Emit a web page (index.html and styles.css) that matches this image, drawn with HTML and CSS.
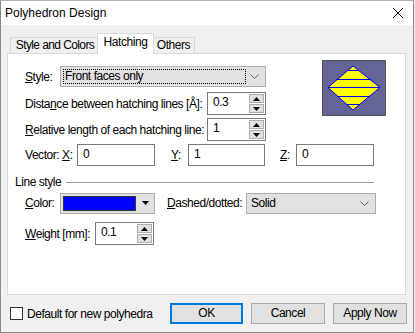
FILE: index.html
```html
<!DOCTYPE html>
<html>
<head>
<meta charset="utf-8">
<link rel="stylesheet" href="styles.css">
</head>
<body>
<div class="window">
  <div class="titlebar">
    <span class="title">Polyhedron Design</span>
    <svg class="close" width="12" height="12" viewBox="0 0 12 12"><path d="M1 1 L11 11 M11 1 L1 11" stroke="#000" stroke-width="1"/></svg>
  </div>
  <div class="tabs">
    <div class="tab t1">Style and Colors</div>
    <div class="tab t2 selected">Hatching</div>
    <div class="tab t3">Others</div>
  </div>
  <div class="panel">
    <div class="top">
      <div class="leftcol">
        <div class="row r1">
          <span class="lbl"><u>S</u>tyle:</span>
          <div class="combo wide">
            <span class="focus">Front faces only</span>
            <svg class="chev" width="9" height="5" viewBox="0 0 9 5"><path d="M0.5 0.5 L4.5 4.5 L8.5 0.5" fill="none" stroke="#666" stroke-width="1"/></svg>
          </div>
        </div>
        <div class="row r2">
          <span class="lbl">Dista<u>n</u>ce between hatching lines [Å]:</span>
          <div class="spin">
            <div class="edit">0.3</div>
            <div class="btns">
              <div class="sb"><svg width="7" height="4" viewBox="0 0 7 4"><path d="M3.5 0 L7 4 L0 4 Z" fill="#000"/></svg></div>
              <div class="sb"><svg width="7" height="4" viewBox="0 0 7 4"><path d="M0 0 L7 0 L3.5 4 Z" fill="#000"/></svg></div>
            </div>
          </div>
        </div>
        <div class="row r3">
          <span class="lbl"><u>R</u>elative length of each hatching line:</span>
          <div class="spin">
            <div class="edit">1</div>
            <div class="btns">
              <div class="sb"><svg width="7" height="4" viewBox="0 0 7 4"><path d="M3.5 0 L7 4 L0 4 Z" fill="#000"/></svg></div>
              <div class="sb"><svg width="7" height="4" viewBox="0 0 7 4"><path d="M0 0 L7 0 L3.5 4 Z" fill="#000"/></svg></div>
            </div>
          </div>
        </div>
      </div>
      <div class="preview">
        <svg width="62" height="54" viewBox="0 0 62 54">
          <rect width="62" height="54" fill="#646496"/>
          <polygon points="30,5 57,26.5 30,49 5,26.5" fill="#ffff00" stroke="#0000ff" stroke-width="1"/>
          <path d="M25.5 9.5 H35 M13 18.5 H47.5 M5 26.5 H57 M14 35.5 H47 M24 43.5 H36" stroke="#0000ff" stroke-width="1"/>
        </svg>
      </div>
    </div>
    <div class="row vec">
      <span class="vl1">Vector: <u>X</u>:</span>
      <div class="edit vx">0</div>
      <span class="vl2"><u>Y</u>:</span>
      <div class="edit vy">1</div>
      <span class="vl3"><u>Z</u>:</span>
      <div class="edit vz">0</div>
    </div>
    <div class="group">
      <span class="gtitle">Line style</span>
      <span class="gline"></span>
    </div>
    <div class="row crow">
      <span class="cl"><u>C</u>olor:</span>
      <div class="colorbtn">
        <span class="swatch"></span>
        <svg width="7" height="4" viewBox="0 0 7 4"><path d="M0 0 L7 0 L3.5 4 Z" fill="#000"/></svg>
      </div>
      <span class="dl"><u>D</u>ashed/dotted:</span>
      <div class="combo dash">
        <span class="ctext">Solid</span>
        <svg class="chev" width="9" height="5" viewBox="0 0 9 5"><path d="M0.5 0.5 L4.5 4.5 L8.5 0.5" fill="none" stroke="#666" stroke-width="1"/></svg>
      </div>
    </div>
    <div class="row wrow">
      <span class="wl"><u>W</u>eight [mm]:</span>
      <div class="spin">
        <div class="edit">0.1</div>
        <div class="btns">
          <div class="sb"><svg width="7" height="4" viewBox="0 0 7 4"><path d="M3.5 0 L7 4 L0 4 Z" fill="#000"/></svg></div>
          <div class="sb"><svg width="7" height="4" viewBox="0 0 7 4"><path d="M0 0 L7 0 L3.5 4 Z" fill="#000"/></svg></div>
        </div>
      </div>
    </div>
  </div>
  <div class="footer">
    <label class="check"><span class="box"></span>Default for new polyhedra</label>
    <div class="buttons">
      <div class="btn ok">OK</div>
      <div class="btn">Cancel</div>
      <div class="btn">Apply Now</div>
    </div>
  </div>
</div>
</body>
</html>
```
FILE: styles.css
```css
html, body {
  margin: 0;
  padding: 0;
  background: #f0f0f0;
}
body {
  font-family: "Liberation Sans", Arial, sans-serif;
  font-size: 12px;
  letter-spacing: -0.45px;
  color: #000;
  white-space: nowrap;
}
u { text-decoration: underline; text-underline-offset: 1px; }
.window {
  width: 414px;
  height: 333px;
  box-sizing: border-box;
  border: 1px solid #8a8a8a;
  border-top: 1px solid #b0b0b0;
  background: #f0f0f0;
  display: flex;
  flex-direction: column;
}
.titlebar {
  height: 24px;
  background: #fff;
  display: flex;
  align-items: center;
  justify-content: space-between;
  padding: 0 9px 0 4px;
  flex: none;
}
.title { font-size: 12px; letter-spacing: 0; }
.close { display: block; }
.tabs {
  height: 28px;
  display: flex;
  align-items: flex-end;
  padding-left: 9px;
  flex: none;
}
.tab {
  box-sizing: border-box;
  height: 16px;
  border: 1px solid #d9d9d9;
  border-bottom: none;
  background: #f0f0f0;
  text-align: center;
  line-height: 15px;
}
.t1 { width: 89px; border-right: none; letter-spacing: -0.6px; }
.t2 { width: 57px; margin: 0 -1px -1px -2px; }
.t3 { width: 42px; border-left: none; }
.tab.selected {
  height: 21px;
  background: #fff;
  position: relative;
  z-index: 1;
  line-height: 17px;
}
.panel {
  flex: none;
  box-sizing: border-box;
  width: 399px;
  height: 242px;
  margin-left: 6px;
  border: 1px solid #d9d9d9;
  background: #fff;
  padding: 0 0 0 7px;
}
.top {
  display: flex;
  align-items: flex-start;
  margin-left: 10px;
}
.leftcol {
  width: 241px;
  padding-top: 12px;
  display: flex;
  flex-direction: column;
}
.row {
  display: flex;
  align-items: center;
}
.r1 { height: 21px; justify-content: space-between; }
.r2 { height: 23px; margin-top: 5px; justify-content: space-between; }
.r3 { height: 23px; margin-top: 3px; justify-content: space-between; }
.combo {
  box-sizing: border-box;
  height: 21px;
  background: #e1e1e1;
  border: 1px solid #adadad;
  display: flex;
  align-items: center;
  justify-content: space-between;
  padding: 0 6px 0 2px;
}
.combo.wide { width: 206px; }
.focus {
  box-sizing: border-box;
  width: 183px;
  height: 15px;
  border: 1px dotted #000;
  line-height: 13px;
  padding-left: 1px;
}
.chev { display: block; }
.spin {
  display: flex;
  height: 23px;
}
.edit {
  box-sizing: border-box;
  border: 1px solid #7a7a7a;
  background: #fff;
  height: 100%;
  padding-left: 5px;
  line-height: 19px;
}
.spin .edit { width: 42px; border-right: none; }
.btns {
  width: 17px;
  box-sizing: border-box;
  border: 1px solid #7a7a7a;
  border-left: none;
  background: #fff;
  display: flex;
  flex-direction: column;
  justify-content: space-between;
  padding: 1px 1px 1px 0;
}
.sb {
  flex: 1;
  box-sizing: border-box;
  background: #e1e1e1;
  border: 1px solid #adadad;
  display: flex;
  align-items: center;
  justify-content: center;
}
.sb + .sb { margin-top: 1px; }
.sb svg { display: block; }
.preview {
  margin-left: 56px;
  margin-top: 6px;
  width: 64px;
  height: 56px;
  box-sizing: border-box;
  border: 1px solid #555;
}
.preview svg { display: block; }
.vec {
  margin: 3px 0 0 10px;
  height: 22px;
}
.vec .edit { height: 22px; line-height: 18px; }
.vl1 { width: 52px; }
.vx { width: 78px; }
.vl2 { width: 17px; margin-left: 16px; }
.vy { width: 77px; }
.vl3 { width: 16px; margin-left: 15px; }
.vz { width: 78px; }
.group {
  display: flex;
  align-items: center;
  height: 14px;
  margin-top: 9px;
  width: 359px;
}
.gtitle { white-space: nowrap; }
.gline {
  flex: 1;
  height: 1px;
  background: #a0a0a0;
  margin-left: 5px;
}
.crow { margin: 3px 0 0 10px; height: 22px; }
.cl { width: 35px; }
.colorbtn {
  box-sizing: border-box;
  width: 95px;
  height: 21px;
  background: #e1e1e1;
  border: 1px solid #adadad;
  display: flex;
  align-items: center;
  padding: 0 5px 0 2px;
  justify-content: space-between;
}
.swatch {
  width: 73px;
  height: 15px;
  box-sizing: border-box;
  background: #0000ff;
  border: 1px solid #333;
}
.dl { margin-left: 12px; width: 79px; }
.combo.dash { width: 130px; height: 21px; padding-left: 4px; }
.wrow { margin: 8px 0 0 10px; height: 23px; }
.wl { width: 70px; }
.footer {
  flex: 1;
  display: flex;
  align-items: flex-start;
  justify-content: space-between;
  padding: 8px 6px 0 9px;
}
.check {
  display: flex;
  align-items: center;
  height: 21px;
}
.box {
  width: 13px;
  height: 13px;
  box-sizing: border-box;
  border: 1px solid #333;
  background: #fff;
  margin-right: 4px;
}
.buttons { display: flex; gap: 8px; }
.btn {
  box-sizing: border-box;
  width: 74px;
  height: 21px;
  background: #e1e1e1;
  border: 1px solid #adadad;
  text-align: center;
  line-height: 19px;
}
.btn.ok {
  border: 2px solid #0078d7;
  line-height: 17px;
  width: 73px;
}
```
